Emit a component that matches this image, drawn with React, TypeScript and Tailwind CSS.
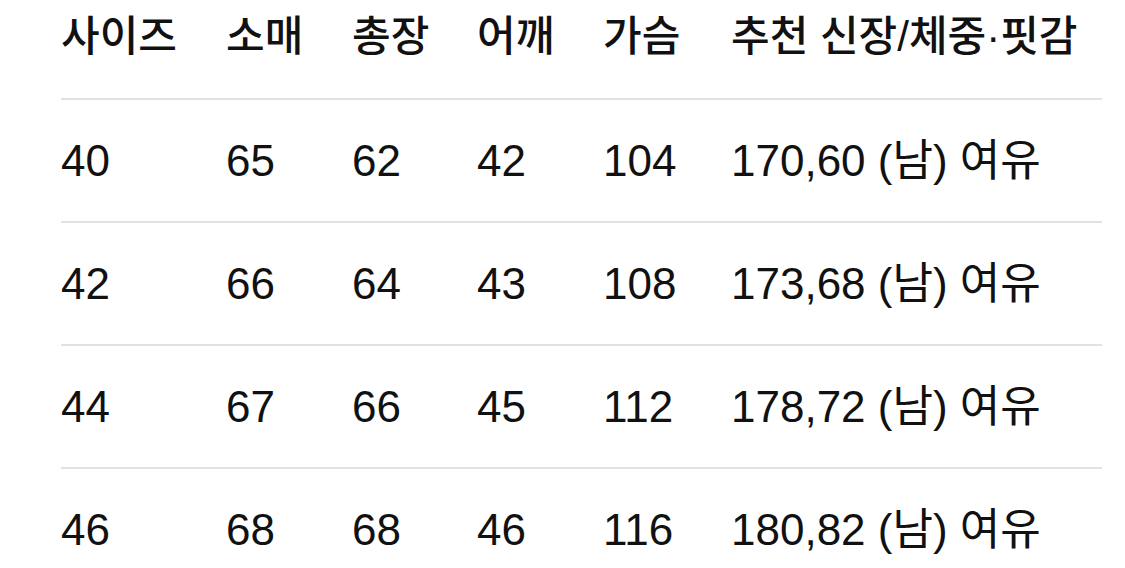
const rows = [
  ['40', '65', '62', '42', '104', '170,60 (남) 여유'],
  ['42', '66', '64', '43', '108', '173,68 (남) 여유'],
  ['44', '67', '66', '45', '112', '178,72 (남) 여유'],
  ['46', '68', '68', '46', '116', '180,82 (남) 여유'],
]

const headers = ['사이즈', '소매', '총장', '어깨', '가슴', '추천 신장/체중·핏감']

const cols = 'grid grid-cols-[165px_126px_125px_126px_128px_1fr] items-center'

export default function App() {
  return (
    <div
      className="w-[1125px] h-[568px] overflow-hidden bg-white text-[#111111]"
      style={{ fontFamily: '"Liberation Sans", "Noto Sans CJK KR", sans-serif' }}
    >
      <div className="ml-[61px] w-[1041px]">
        <div className={`${cols} h-[100px] pb-[25px] border-b-2 border-[#e2e2e2] text-[42px] font-medium leading-none`}>
          {headers.map((h) => (
            <div key={h} className="whitespace-nowrap">{h}</div>
          ))}
        </div>
        {rows.map((r, i) => (
          <div
            key={i}
            className={`${cols} h-[123px] border-b-2 border-[#e2e2e2] text-[44px] leading-none`}
          >
            {r.map((c, j) => (
              <div key={j} className="whitespace-nowrap">{c}</div>
            ))}
          </div>
        ))}
      </div>
    </div>
  )
}
